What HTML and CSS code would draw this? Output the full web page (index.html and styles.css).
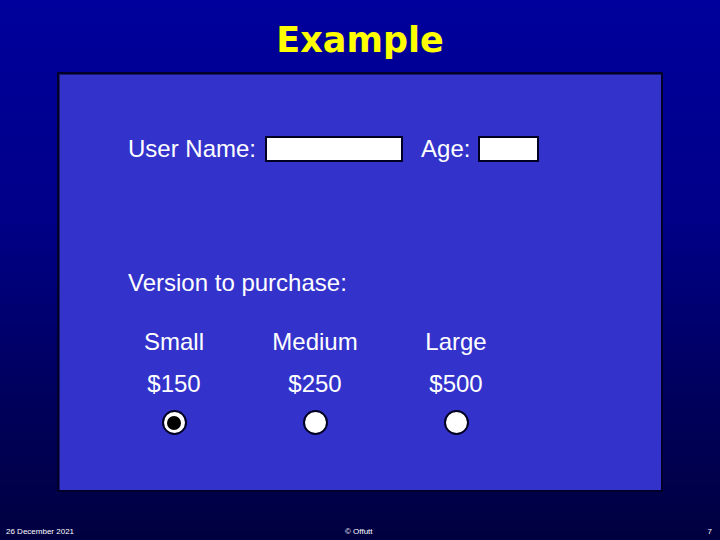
FILE: index.html
```html
<!DOCTYPE html>
<html>
<head>
<meta charset="utf-8">
<link rel="stylesheet" href="styles.css">
</head>
<body>
<div class="slide">
  <h1 class="title">Example</h1>
  <div class="panel">
    <div class="row-user">
      <span class="label">User Name:</span>
      <span class="input input-name"></span>
      <span class="label label-age">Age:</span>
      <span class="input input-age"></span>
    </div>
    <div class="version">Version to purchase:</div>
    <div class="options">
      <div class="opt">Small</div>
      <div class="opt">Medium</div>
      <div class="opt">Large</div>
      <div class="opt price">$150</div>
      <div class="opt price">$250</div>
      <div class="opt price">$500</div>
      <div class="opt radio-cell"><span class="radio checked"></span></div>
      <div class="opt radio-cell"><span class="radio"></span></div>
      <div class="opt radio-cell"><span class="radio"></span></div>
    </div>
  </div>
  <div class="footer">
    <span class="foot-date">26 December 2021</span>
    <span class="foot-mid">© Offutt</span>
    <span class="foot-num">7</span>
  </div>
</div>
</body>
</html>
```
FILE: styles.css
```css
html, body {
  margin: 0;
  padding: 0;
}
body {
  width: 720px;
  height: 540px;
  overflow: hidden;
  font-family: "Liberation Sans", Arial, sans-serif;
}
.slide {
  width: 720px;
  height: 540px;
  background: linear-gradient(to bottom, #00009c 0%, #000088 40%, #00005a 75%, #000040 100%);
  display: flex;
  flex-direction: column;
}
.title {
  margin: 0;
  height: 72px;
  box-sizing: border-box;
  padding-top: 17px;
  text-align: center;
  font-family: "DejaVu Sans", Verdana, sans-serif;
  font-weight: bold;
  font-size: 35px;
  line-height: 46px;
  color: #ffff00;
}
.panel {
  margin-left: 57px;
  width: 606px;
  height: 420px;
  box-sizing: border-box;
  background: #3333cc;
  border: 2px solid #000028;
  box-shadow: inset 1px 1px 0 #1a1a70;
  color: #ffffff;
  font-size: 24px;
  line-height: 28px;
  padding-top: 61px;
}
.row-user {
  display: flex;
  align-items: center;
  height: 28px;
  margin-left: 69px;
}
.input {
  display: block;
  height: 26px;
  box-sizing: border-box;
  background: #ffffff;
  border: 2px solid #000022;
}
.input-name {
  width: 138px;
  margin-left: 9px;
}
.label-age {
  margin-left: 18px;
}
.input-age {
  width: 61px;
  margin-left: 8px;
}
.version {
  margin-left: 69px;
  margin-top: 106px;
}
.options {
  margin-left: 45px;
  margin-top: 31px;
  display: grid;
  grid-template-columns: 140px 142px 140px;
  row-gap: 13px;
}
.opt {
  text-align: center;
}
.price {
  margin-top: 1px;
}
.radio-cell {
  height: 24px;
  display: flex;
  justify-content: center;
  margin-top: -1px;
}
.radio {
  width: 25px;
  height: 25px;
  box-sizing: border-box;
  border-radius: 50%;
  background: #ffffff;
  border: 2px solid #000022;
  display: flex;
  align-items: center;
  justify-content: center;
}
.radio.checked::after {
  content: "";
  width: 14px;
  height: 14px;
  border-radius: 50%;
  background: #000000;
}
.footer {
  margin-top: auto;
  height: 16px;
  display: flex;
  align-items: center;
  position: relative;
  font-size: 8px;
  line-height: 10px;
  color: #ffffff;
}
.foot-date {
  margin-left: 6px;
}
.foot-mid {
  position: absolute;
  left: 345px;
}
.foot-num {
  margin-left: auto;
  margin-right: 8px;
}
```
